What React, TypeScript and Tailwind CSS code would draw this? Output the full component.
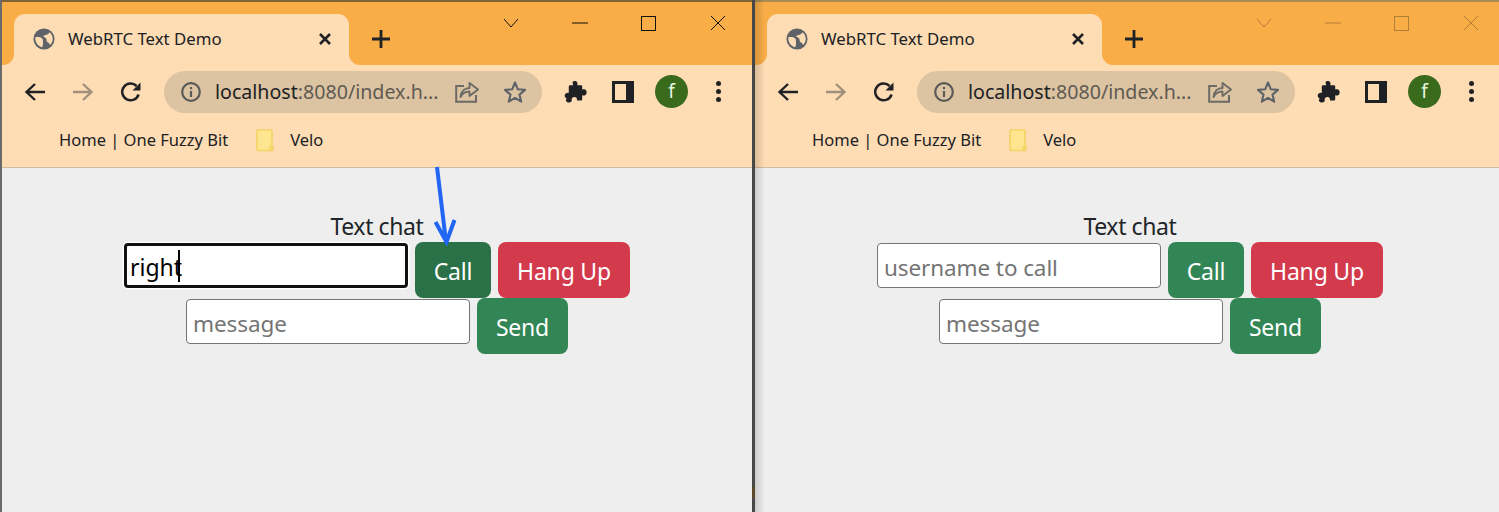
import React from "react";

const font = "font-['Noto_Sans','Open_Sans',sans-serif]";

function Globe() {
  return (
    <svg width="22" height="22" viewBox="0 0 24 24" className="shrink-0">
      <circle cx="12" cy="12" r="11.5" fill="#5f6368" />
      <path d="M2.5 10 C5 9.5 8 9.5 10 11.5 C11.5 13 10.5 15 11 17 C11 18.5 10.5 20 10 21 C5.5 20 2 15 2.5 10Z" fill="#fedcb4" />
      <path d="M11 9 C13 7 17 7.5 18 4.5 C20.5 6.5 22 10 21.5 13 C21 15.5 20 17 18.5 18.5 C18 16.5 16.5 15.5 15 15 C15 13 15 11.5 13.5 10.5 C12.5 10 11.5 10 11 9Z" fill="#fedcb4" />
    </svg>
  );
}

function ToolIcon({ w, h, children }: { w: number; h: number; children: React.ReactNode }) {
  return (
    <svg width={w} height={h} viewBox={`0 0 ${w} ${h}`} fill="none" className="shrink-0">
      {children}
    </svg>
  );
}

function BrowserChrome({ active }: { active: boolean }) {
  const ctl = active ? "#111111" : "#b27f36";
  return (
    <div className={font}>
      <div className={active ? "h-[2px] bg-[#7c6438]" : "h-[2px] bg-[#a98c56]"} />
      <div className="flex h-[63px] items-start bg-[#f9ad47] pl-[14px]">
        <div className="relative mt-[12px] flex h-[51px] w-[335px] shrink-0 items-center rounded-t-[11px] bg-[#fedcb4] pb-[2px] pl-[19px] pr-[17px]">
          <div className="absolute bottom-0 left-[-12px] h-3 w-3 bg-[#fedcb4]">
            <div className="h-3 w-3 rounded-br-[11px] bg-[#f9ad47]" />
          </div>
          <div className="absolute bottom-0 right-[-12px] h-3 w-3 bg-[#fedcb4]">
            <div className="h-3 w-3 rounded-bl-[11px] bg-[#f9ad47]" />
          </div>
          <Globe />
          <span className="ml-[13px] flex-1 pt-px text-[16.8px] text-[#202124]">WebRTC Text Demo</span>
          <svg width="14" height="14" viewBox="0 0 14 14">
            <path d="M2 2 L12 12 M12 2 L2 12" stroke="#202124" strokeWidth="2.6" />
          </svg>
        </div>
        <svg width="20" height="20" viewBox="0 0 20 20" className="ml-[22px] mt-[27px] shrink-0">
          <path d="M10 1 V19 M1 10 H19" stroke="#202124" strokeWidth="2.8" />
        </svg>
        <div className="ml-[85px] flex shrink-0">
          <div className="flex h-[42px] w-[69px] items-center justify-center">
            <svg width="16" height="10" viewBox="0 0 16 10"><path d="M1 1 L8 9 L15 1" stroke={ctl} fill="none" /></svg>
          </div>
          <div className="flex h-[42px] w-[69px] items-center justify-center">
            <svg width="16" height="2" viewBox="0 0 16 2"><path d="M0 1 H16" stroke={ctl} /></svg>
          </div>
          <div className="flex h-[42px] w-[69px] items-center justify-center">
            <svg width="15" height="15" viewBox="0 0 15 15"><rect x="0.5" y="0.5" width="14" height="14" stroke={ctl} fill="none" /></svg>
          </div>
          <div className="flex h-[42px] w-[69px] items-center justify-center">
            <svg width="16" height="16" viewBox="0 0 16 16"><path d="M1 1 L15 15 M15 1 L1 15" stroke={ctl} /></svg>
          </div>
        </div>
      </div>
      <div className="flex h-[53px] items-center bg-[#fedcb4] pl-[24px]">
        <ToolIcon w={22} h={20}>
          <path d="M21 10 H3 M11 2 L2.5 10 L11 18" stroke="#202124" strokeWidth="2.4" />
        </ToolIcon>
        <div className="ml-[26px]">
          <ToolIcon w={22} h={20}>
            <path d="M1 10 H19 M11 2 L19.5 10 L11 18" stroke="#a08f7a" strokeWidth="2.4" />
          </ToolIcon>
        </div>
        <div className="ml-[26px]">
          <ToolIcon w={22} h={22}>
            <path d="M18.6 13.5 A8.4 8.4 0 1 1 16.6 5" stroke="#202124" strokeWidth="2.5" />
            <path d="M20.5 1.5 V9.5 H12.5 Z" fill="#202124" />
          </ToolIcon>
        </div>
        <div className="ml-[22px] flex h-[42px] w-[378px] shrink-0 items-center rounded-full bg-[#dcc3a2] pl-[17px]">
          <svg width="20" height="20" viewBox="0 0 20 20" className="shrink-0">
            <circle cx="10" cy="10" r="8.8" stroke="#5a5a58" strokeWidth="2.2" fill="none" />
            <path d="M10 9 V15 M10 5 V7.2" stroke="#5a5a58" strokeWidth="2.2" />
          </svg>
          <span className="ml-[14px] w-[240px] pt-px text-[19.6px] text-[#202124]">
            localhost<span className="text-[#5f5a52]">:8080/index.h...</span>
          </span>
          <svg width="24" height="22" viewBox="0 0 24 22" fill="none" className="shrink-0">
            <path d="M9 5 H1.2 V20.8 H21 V14" stroke="#6b6a66" strokeWidth="2" />
            <path d="M5.5 16 C6 10 10 7 14.5 7 V2 L23 8.5 L14.5 15 V10.5 C11 10.5 7.5 12 5.5 16Z" stroke="#6b6a66" strokeWidth="1.9" strokeLinejoin="round" />
          </svg>
          <svg width="24" height="24" viewBox="0 0 24 24" fill="none" className="ml-[24px] shrink-0">
            <path d="M12 2.5 L14.8 9.3 L22 9.9 L16.5 14.6 L18.2 21.7 L12 17.9 L5.8 21.7 L7.5 14.6 L2 9.9 L9.2 9.3 Z" stroke="#5f6368" strokeWidth="2.1" strokeLinejoin="round" />
          </svg>
        </div>
        <svg width="23" height="23" viewBox="0 0 24 24" className="ml-[22px] shrink-0">
          <path fill="#202124" d="M9 2.5 C9.5 0.5 13.5 0.5 14 3 C14.2 4 13.8 4.8 14 5.5 L18 5.5 C18.8 5.5 19 6.2 19 7 L19 10 C20 9.6 21 9.4 22 10 C24.6 11.5 24 16 21 16.2 C20.2 16.2 19.6 15.8 19 15.8 L19 20 C19 21 18.2 21.5 17.5 21.5 L13.5 21.5 C13.7 20 13.6 18.4 11.5 17.8 C9.5 17.3 8 18.6 8 20 C8 21 8.3 22 7.5 22.8 C6 24 3 23.6 2.2 21.8 C1.7 20.5 2.4 19.5 3 19 C1.5 18.8 0.6 17.5 0.8 16 C1 14 3 13 5 13.5 L5 7 C5 6 5.6 5.5 6.5 5.5 L9.5 5.5 C9.5 4.5 8.8 3.5 9 2.5Z" />
        </svg>
        <svg width="22" height="22" viewBox="0 0 22 22" className="ml-[25px] shrink-0">
          <path fillRule="evenodd" fill="#202124" d="M0 0 H22 V22 H0 Z M3 3 V19 H14 V3 Z" />
        </svg>
        <div className="ml-[21px] flex h-[33px] w-[33px] shrink-0 items-center justify-center rounded-full bg-[#3a6b1c] text-[19px] text-[#e8f5e0]">
          f
        </div>
        <div className="ml-[28px] flex shrink-0 flex-col gap-[3.5px]">
          <div className="h-[4.5px] w-[4.5px] rounded-full bg-[#202124]" />
          <div className="h-[4.5px] w-[4.5px] rounded-full bg-[#202124]" />
          <div className="h-[4.5px] w-[4.5px] rounded-full bg-[#202124]" />
        </div>
      </div>
      <div className="flex h-[50px] items-center border-b border-[#d2bca0] bg-[#fedcb4] pb-[5px] pl-[59px] text-[16.5px] text-[#202124]">
        <span>Home | One Fuzzy Bit</span>
        <svg width="19" height="23" viewBox="0 0 19 23" className="ml-[28px] shrink-0">
          <path d="M1 2 Q1 1 2 1 H15 Q16 1 16 2 V21.5 H2 Q1 21.5 1 20.5Z" fill="#fde68f" stroke="#f3d466" strokeWidth="1.6" />
          <path d="M14 21.5 V17.5 Q15.5 15.8 17 17.5 V21.5" fill="none" stroke="#f3d466" strokeWidth="1.4" />
        </svg>
        <span className="ml-[15px]">Velo</span>
      </div>
    </div>
  );
}

const btn = "flex h-[56px] shrink-0 items-center justify-center rounded-[8px] pt-[3px] text-[23px] tracking-[-0.2px] text-white";
const inputCls =
  "h-[45px] w-[284px] shrink-0 rounded-[4px] border border-[#767676] bg-white pl-[6px] pt-[3px] text-[22.5px] tracking-[-0.1px] text-black outline-none placeholder:text-[#757575]";

function Page({ active }: { active: boolean }) {
  return (
    <div className={`${font} h-[344px] bg-[#eeeeee] pl-px pt-[38px] text-[#212529]`}>
      <div className="h-[36px] pt-[2px] text-center text-[23px] leading-[36px] tracking-[-0.4px]">Text chat</div>
      <div className="flex justify-center gap-[7px]">
        {active ? (
          <div className="relative mt-px h-[45px] w-[284px] shrink-0">
            <input
              readOnly
              value="right"
              className="h-[45px] w-[284px] rounded-[4px] border-[3px] border-[#111111] bg-white pl-[3px] pt-[3px] text-[23px] text-black shadow-[0_0_0_1.5px_#ffffff] outline-none"
            />
            <div className="absolute left-[54px] top-[7px] h-[32px] w-[2px] bg-black" />
          </div>
        ) : (
          <input readOnly placeholder="username to call" className={`${inputCls} mt-px`} />
        )}
        <div className={`${btn} w-[76px] ${active ? "bg-[#2b7148]" : "bg-[#328555]"}`}>Call</div>
        <div className={`${btn} w-[132px] bg-[#d33a4c]`}>Hang Up</div>
      </div>
      <div className="flex justify-center gap-[7px]">
        <input readOnly placeholder="message" className={`${inputCls} mt-px`} />
        <div className={`${btn} w-[91px] bg-[#328555]`}>Send</div>
      </div>
    </div>
  );
}

function Win({ active }: { active: boolean }) {
  return (
    <div className="w-[753px] shrink-0">
      <BrowserChrome active={active} />
      <Page active={active} />
    </div>
  );
}

export default function App() {
  return (
    <div className="relative flex h-[512px] w-[1499px] overflow-hidden bg-[#eeeeee]">
      <Win active />
      <Win active={false} />
      <div className="absolute left-0 top-0 h-full w-[2px] bg-[#6a6a6a]" />
      <div className="absolute left-[752px] top-0 h-full w-[3px] bg-[#474747]" />
      <div className="absolute left-[752px] top-[487px] h-[11px] w-[3px] bg-[#5c4a2c]" />
      <div className="absolute left-[755px] top-0 h-full w-[10px] bg-gradient-to-r from-black/15 to-transparent" />
      <svg width="40" height="80" viewBox="0 0 40 80" fill="none" className="absolute left-[425px] top-[166px]">
        <path d="M12 1 L21 76 M10.5 56 L21.5 76 L29.5 54" stroke="#2166f5" strokeWidth="4" />
      </svg>
    </div>
  );
}
